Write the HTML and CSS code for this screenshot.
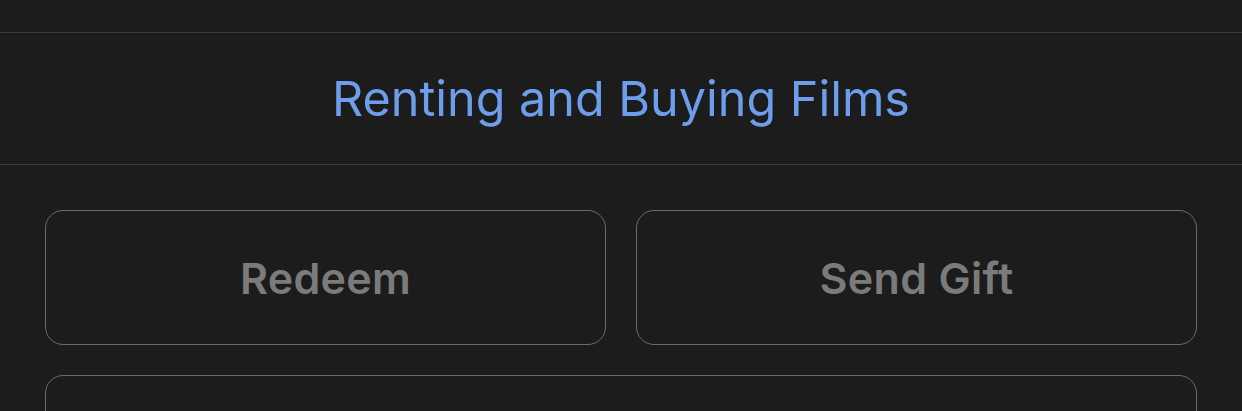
FILE: index.html
```html
<!DOCTYPE html>
<html lang="en">
<head>
    <meta charset="UTF-8">
    <meta name="viewport" content="width=device-width, initial-scale=1.0">
    <title>Renting and Buying Films</title>
    <link rel="stylesheet" href="styles.css">
</head>
<body>
    <div class="top-space"></div>
    <div class="section-title">
        <a href="#" class="title-link">Renting and Buying Films</a>
    </div>
    <div class="actions">
        <div class="action-row">
            <button class="action-btn">Redeem</button>
            <button class="action-btn">Send Gift</button>
        </div>
        <button class="action-btn wide"></button>
    </div>
</body>
</html>
```

FILE: styles.css
```css
body {
    margin: 0;
    background-color: #1c1c1c;
    font-family: Inter, "Noto Sans", sans-serif;
    overflow: hidden;
}
.top-space { height: 32px; border-bottom: 1px solid #3a3a3a; }
.section-title {
    height: 131px;
    display: flex;
    align-items: center;
    justify-content: center;
    border-bottom: 1px solid #3a3a3a;
}
.title-link {
    color: #6d9eeb;
    text-decoration: none;
    font-size: 48.5px;
}
.actions {
    padding: 45px 45px 0 45px;
    display: flex;
    flex-direction: column;
    gap: 30px;
}
.action-row {
    display: grid;
    grid-template-columns: 1fr 1fr;
    gap: 30px;
}
.action-btn {
    height: 135px;
    background: transparent;
    border: 1px solid #6b6b6b;
    border-radius: 18px;
    color: #7b7b7b;
    font-family: Inter, "Noto Sans", sans-serif;
    font-size: 43px;
    font-weight: 600;
    letter-spacing: 0.3px;
    padding: 0;
}
.action-btn.wide { width: 100%; }
```
